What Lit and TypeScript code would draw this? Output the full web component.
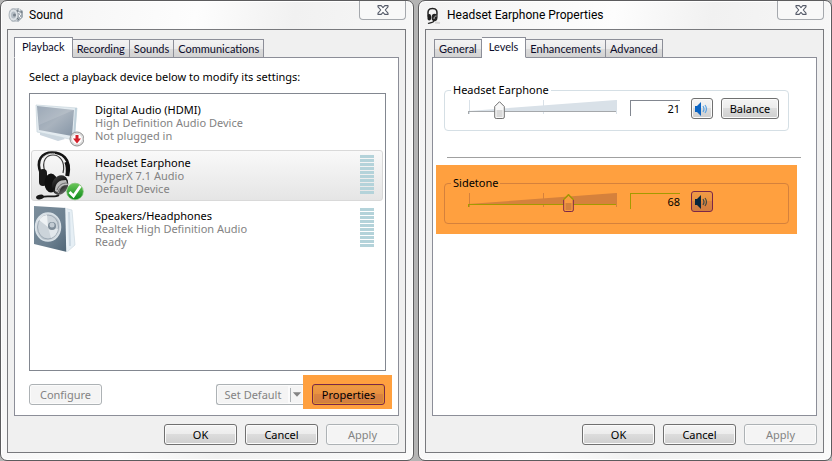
import { LitElement, html, svg, css } from "lit";
import { customElement, property } from "lit/decorators.js";
import { classMap } from "lit/directives/class-map.js";

const shared = css`
  * { box-sizing: border-box; }
  button, input {
    font: inherit;
    color: inherit;
    margin: 0;
  }
  svg { display: block; }
  .btn {
    width: 73px;
    height: 21px;
    padding: 0;
    border: 1px solid #707070;
    border-radius: 3px;
    background: linear-gradient(#f4f4f4 0%, #ececec 48%, #dcdcdc 50%, #cfcfcf 100%);
    box-shadow: inset 0 0 0 1px #fbfbfb;
    color: #000;
    text-align: center;
    line-height: 19px;
  }
  .btn:disabled {
    border-color: #adb2b5;
    background: #f4f4f4;
    color: #838383;
  }
`;

const closeIcon = svg`
  <svg width="12" height="10" viewBox="0 0 12 10" aria-hidden="true">
    <path d="M1 .6h3.200L6 2.600 7.800.6H11v1.200L8.200 5 11 8.200v1.200H7.800L6 7.400 4.200 9.400H1V8.200L3.800 5 1 1.800z"
      fill="#fff" stroke="#565b69" stroke-width="1.100" stroke-linejoin="round"/>
  </svg>`;

const soundIcon = svg`
  <svg width="16" height="16" viewBox="0 0 16 16" aria-hidden="true">
    <path d="M4 1h6l5 3v6l-5 5H4L1 11V4z" fill="#c9ced3"/>
    <path d="M10 1l5 3v6l-5 5-2-3 3-4-3-4z" fill="#a2abb3"/>
    <ellipse cx="5.500" cy="8" rx="4.500" ry="6" fill="#dde2e6" stroke="#a1a9b0" stroke-width=".8"/>
    <ellipse cx="5.500" cy="8" rx="2.500" ry="3.500" fill="#b3bcc4"/>
    <circle cx="6.500" cy="8" r="1.500" fill="#77818b"/>
    <path d="M10 5l3 2-2 2 2 2M11 2l1 2" stroke="#f3f5f6" fill="none"/>
    <path d="M9 3l1 2M13 4l1 2M9 11l2 2" stroke="#6f7982" fill="none"/>
  </svg>`;

const headsetSmall = svg`
  <svg width="16" height="18" viewBox="0 0 16 18" aria-hidden="true">
    <path d="M2.500 10C1 3 3 1.500 6.500 1.500S12 3 10.500 10" fill="none" stroke="#222" stroke-width="1.500"/>
    <rect x="1.500" y="7" width="3.500" height="6.500" rx="1.700" fill="#1c1c1c"/>
    <ellipse cx="8.500" cy="10.500" rx="3" ry="3.800" fill="#262626"/>
    <path d="M8 12c0-2 1-3 2.500-3" stroke="#bdbdbd" fill="none"/>
    <path d="M8 14c-1 2-3 1-6 2.500" stroke="#222" fill="none" stroke-width="1.300"/>
    <path d="M9 15.500l5 .5" stroke="#d5d5d5" stroke-width="2"/>
  </svg>`;

const monitorIcon = svg`
  <svg width="50" height="50" viewBox="0 0 50 50" aria-hidden="true">
    <defs>
      <linearGradient id="scr" x1="0" y1="0" x2="1" y2="1">
        <stop offset="0" stop-color="#8e9dad"/><stop offset=".5" stop-color="#a9b3be"/><stop offset="1" stop-color="#8595a6"/>
      </linearGradient>
    </defs>
    <path d="M6 33l21 5 4 3-7 2-18-6z" fill="#cbd6df"/>
    <path d="M2 7 43 10 40 42 3 34z" fill="#e3ebf0" stroke="#c9d5dd" stroke-width=".7"/>
    <path d="M41 10h2l-2 31-2 1z" fill="#bfd0da"/>
    <path d="M3 8 40 12 38 38 5 32z" fill="url(#scr)"/>
    <path d="M3 8 40 12 5 27z" fill="#fff" opacity=".13"/>
    <circle cx="43" cy="41" r="7" fill="#e8e8e8" stroke="#8e8e8e"/>
    <circle cx="43" cy="41" r="5.500" fill="#fff" stroke="#d2d2d2"/>
    <path d="M41.500 37h3v3.500h2.500L43 45.500 39 40.500h2.500z" fill="#d3202a"/>
  </svg>`;

const headsetIcon = svg`
  <svg width="50" height="50" viewBox="0 0 50 50" aria-hidden="true">
    <defs>
      <linearGradient id="cup" x1="0" y1="0" x2="1" y2="1">
        <stop offset="0" stop-color="#4a4a4a"/><stop offset=".5" stop-color="#111"/><stop offset="1" stop-color="#888"/>
      </linearGradient>
      <linearGradient id="ok" x1="0" y1="0" x2="0" y2="1">
        <stop offset="0" stop-color="#6cc75a"/><stop offset="1" stop-color="#0c8a1a"/>
      </linearGradient>
    </defs>
    <path d="M7 23C1 8 9 1.500 18 1.500S38 7 34 25" fill="none" stroke="#151515" stroke-width="2.600"/>
    <path d="M11 21C7 9 13 4 19 4s13 6 10 18" fill="none" stroke="#3a3a3a" stroke-width="1.200"/>
    <path d="M32 11c2 4 2 8 1 14" fill="none" stroke="#111" stroke-width="3.500"/>
    <path d="M9 7C12 3 16 2 21 2.500" fill="none" stroke="#b5b5b5" stroke-width=".8"/>
    <rect x="5" y="18" width="8" height="17" rx="4" fill="#1a1a1a"/>
    <ellipse cx="17" cy="32" rx="6.500" ry="9.500" fill="#111"/>
    <ellipse cx="26" cy="34" rx="8" ry="10" fill="url(#cup)" transform="rotate(20 26 34)"/>
    <path d="M21 40c0-8 4-11 11-11l2 5c-6 0-8 3-9 8z" fill="#bcbcbc"/>
    <path d="M23 39c2-5 5-7 10-7M24 41c2-5 5-7 10-6" stroke="#555" stroke-width=".8" fill="none"/>
    <path d="M25 44c-4 3-12 0-17 2" fill="none" stroke="#1a1a1a" stroke-width="1.800"/>
    <ellipse cx="6" cy="46" rx="4" ry="2.200" fill="#161616" transform="rotate(-12 6 46)"/>
    <circle cx="41" cy="40.500" r="8.300" fill="url(#ok)" stroke="#7fc274" stroke-width=".7"/>
    <path d="M35.500 41l4 4 7-10" fill="none" stroke="#fff" stroke-width="2.800"/>
  </svg>`;

const speakerIcon = svg`
  <svg width="50" height="50" viewBox="0 0 50 50" aria-hidden="true">
    <defs>
      <linearGradient id="box" x1="0" y1="0" x2="1" y2="1">
        <stop offset="0" stop-color="#7b8d9b"/><stop offset=".6" stop-color="#6d8191"/><stop offset="1" stop-color="#4f6576"/>
      </linearGradient>
      <linearGradient id="cone" x1="0" y1="0" x2="1" y2="1">
        <stop offset="0" stop-color="#f3f6f8"/><stop offset=".6" stop-color="#b6c0c8"/><stop offset="1" stop-color="#e5eaed"/>
      </linearGradient>
    </defs>
    <path d="M30 4 38 6 41 41 33 48z" fill="#e6eff5" stroke="#c6d3dc" stroke-width=".6"/>
    <path d="M35 8l1 34" stroke="#cddae4" stroke-width="2"/>
    <path d="M0 2 32 4 33 48 0 40z" fill="url(#box)"/>
    <path d="M32 4 33 48" stroke="#edf4f8" stroke-width="1.500"/>
    <ellipse cx="14" cy="23" rx="12.500" ry="14" fill="url(#cone)" stroke="#d8e1e7" stroke-width="1.500"/>
    <ellipse cx="14" cy="23" rx="10.500" ry="12" fill="#ccd4da" stroke="#8f9daa" stroke-width=".8"/>
    <path d="M14 23 5 16a11 12 0 0 1 8-5z" fill="#eef2f4"/>
    <path d="M14 23l10 2a11 12 0 0 1-7 9z" fill="#e2e8ec"/>
    <circle cx="18" cy="22" r="4" fill="#7e8c98"/>
    <circle cx="18" cy="21" r="2.500" fill="#c3ccd3"/>
  </svg>`;

@customElement("dialog-window")
export class DialogWindow extends LitElement {
  @property() heading = "";
  @property() icon = "";
  @property({ attribute: false }) tabs: string[] = [];
  @property({ type: Number }) active = 0;

  static styles = [shared, css`
    :host {
      box-sizing: border-box;
      display: flex;
      flex-direction: column;
      min-width: 0;
      padding: 0 7px 7px 6px;
      border: 1px solid #5c5c5e;
      border-radius: 7px;
      background: linear-gradient(100deg, #f3f3f3 0%, #fdfdfd 40%, #f1f1f1 60%, #fafafa 100%);
      box-shadow: inset 0 0 0 1px #fff;
    }
    .bar {
      display: flex;
      align-items: flex-start;
      height: 28px;
    }
    .icon { width: 22px; padding: 6px 0 0 1px; }
    h1 {
      flex: 1;
      margin: 0;
      font-family: Roboto, "Open Sans", sans-serif;
      font-size: 12px;
      font-weight: 400;
      line-height: 28px;
    }
    .close {
      display: grid;
      place-items: center;
      width: 47px;
      height: 19px;
      padding: 0;
      border: 1px solid #a5a8ad;
      border-top: 0;
      border-radius: 0 0 4px 4px;
      background: #f8f8f8;
    }
    .client {
      flex: 1;
      display: flex;
      flex-direction: column;
      padding: 7px 6px 7px;
      border: 1px solid #78797d;
      background: #f0f0f0;
    }
    .tabs {
      display: flex;
      align-items: flex-end;
      height: 21px;
      margin-bottom: -1px;
      z-index: 1;
    }
    .tab {
      height: 19px;
      padding: 0 4px;
      border: 1px solid #8c8e98;
      border-left-width: 0;
      background: linear-gradient(#f3f3f3, #ebebeb 50%, #dcdcdc 52%, #d2d2d2);
      color: #0b0b2a;
      font-family: Lato, "Open Sans", sans-serif;
      line-height: 17px;
      white-space: nowrap;
    }
    .tab:first-child:not(.on) { margin-left: 2px; border-left-width: 1px; }
    .tab.on {
      height: 21px;
      padding: 0 7px 2px;
      border-left-width: 1px;
      border-bottom-color: #fff;
      background: #fff;
    }
    .tab:not(.on) + .tab.on { border-left-width: 0; }
    .panel {
      flex: 1;
      display: flex;
      flex-direction: column;
      border: 1px solid #8c8e98;
      background: #fff;
    }
    ::slotted(*) { flex: 1; }
    .actions {
      display: flex;
      justify-content: flex-end;
      gap: 8px;
      padding-top: 8px;
    }
  `];

  render() {
    return html`
      <header class="bar">
        <span class="icon">${this.icon === "headset" ? headsetSmall : soundIcon}</span>
        <h1>${this.heading}</h1>
        <button class="close" aria-label="Close">${closeIcon}</button>
      </header>
      <div class="client">
        <div class="tabs" role="tablist">
          ${this.tabs.map((t, i) => html`
            <button role="tab" aria-selected=${i === this.active}
              class=${classMap({ tab: true, on: i === this.active })}>${t}</button>`)}
        </div>
        <section class="panel" role="tabpanel"><slot></slot></section>
        <footer class="actions">
          <button class="btn">OK</button>
          <button class="btn">Cancel</button>
          <button class="btn" disabled>Apply</button>
        </footer>
      </div>`;
  }
}

const devices = [
  { name: "Digital Audio (HDMI)", driver: "High Definition Audio Device", status: "Not plugged in", icon: monitorIcon, meter: false, selected: false },
  { name: "Headset Earphone", driver: "HyperX 7.1 Audio", status: "Default Device", icon: headsetIcon, meter: true, selected: true },
  { name: "Speakers/Headphones", driver: "Realtek High Definition Audio", status: "Ready", icon: speakerIcon, meter: true, selected: false },
];

@customElement("playback-page")
export class PlaybackPage extends LitElement {
  static styles = [shared, css`
    :host {
      display: flex;
      flex-direction: column;
      padding: 11px 6px 6px 14px;
    }
    p { margin: 0; line-height: 16px; }
    .list {
      flex: 1;
      margin: 8px 6px 4px 0;
      padding: 3px 2px 3px 1px;
      border: 1px solid #828790;
      list-style: none;
    }
    .device {
      display: grid;
      grid-template-columns: 50px 1fr 14px;
      column-gap: 11px;
      height: 51px;
      margin-bottom: 2px;
      padding: 0 8px 0 2px;
      border: 1px solid transparent;
      border-radius: 3px;
    }
    .device.on {
      border-color: #d9d9d9;
      background: linear-gradient(#f9f9f9, #e5e5e5);
    }
    .info { padding-top: 5px; line-height: 13px; color: #838383; }
    .name { color: #000; }
    .meter {
      height: 39px;
      margin-top: 4px;
      background: repeating-linear-gradient(#b4d3da 0 3px, transparent 3px 4px);
    }
    .row { display: flex; }
    .spacer { flex: 1; }
    .split { display: flex; }
    .split .main { border-right: 0; border-radius: 3px 0 0 3px; }
    .split .drop {
      display: grid;
      place-items: center;
      width: 14px;
      border-left: 0;
      border-right: 0;
      border-radius: 0;
    }
    .drop svg { border-left: 1px solid #adb2b5; }
    .mark {
      height: 34px;
      padding: 9px 7px 4px 9px;
      background: #ffa03f;
    }
    .mark .btn {
      border-color: #7b2748;
      background: linear-gradient(#f09a46 0%, #e8913f 48%, #db8340 50%, #d17d40 100%);
      box-shadow: inset 0 0 0 1px #e79a2c;
    }
    .row > .btn, .split { margin-top: 9px; }
  `];

  render() {
    return html`
      <p>Select a playback device below to modify its settings:</p>
      <ul class="list">
        ${devices.map((d) => html`
          <li class=${classMap({ device: true, on: d.selected })}>
            ${d.icon}
            <div class="info">
              <div class="name">${d.name}</div>
              <div>${d.driver}</div>
              <div>${d.status}</div>
            </div>
            ${d.meter ? html`<div class="meter"></div>` : ""}
          </li>`)}
      </ul>
      <div class="row">
        <button class="btn" disabled>Configure</button>
        <span class="spacer"></span>
        <div class="split">
          <button class="btn main" disabled>Set Default</button>
          <button class="btn drop" disabled aria-label="More default options">
            <svg width="13" height="14" viewBox="0 0 13 14"><path d="M2 4h9L6.500 9z" fill="#838383"/></svg>
          </button>
        </div>
        <div class="mark"><button class="btn">Properties</button></div>
      </div>`;
  }
}

@customElement("level-group")
export class LevelGroup extends LitElement {
  @property() label = "";
  @property({ type: Number }) level = 0;
  @property({ type: Boolean }) balance = false;
  @property({ type: Boolean, reflect: true }) marked = false;

  static styles = [shared, css`
    :host {
      --line: #d5dfe5;
      --wedge: #d9e1e8;
      --track: #a5a8ab;
      --edge: #707070;
      --glyph: #0a63c2;
      --wave: #5da4e4;
      --field: #828790;
      --thumb: url("data:image/svg+xml,%3Csvg xmlns='http://www.w3.org/2000/svg' width='11' height='18'%3E%3Cpath d='M5.500 .7 10.300 5.500V16q0 1.500-1.500 1.500H2.200Q.7 17.500 .7 16V5.500z' fill='%23f8f8f8' stroke='%23707070'/%3E%3Cpath d='M2.500 9h6v7h-6z' fill='%23d9d9d9'/%3E%3C/svg%3E");
      display: block;
    }
    :host([marked]) {
      --line: #d5813c;
      --wedge: #d5813c;
      --track: #a39a00;
      --edge: #7b2748;
      --glyph: #08263c;
      --wave: #434a42;
      --field: #a39a00;
      --thumb: url("data:image/svg+xml,%3Csvg xmlns='http://www.w3.org/2000/svg' width='11' height='18'%3E%3Cpath d='M5.500 .7 10.300 5.500V16q0 1.500-1.500 1.500H2.200Q.7 17.500 .7 16V5.500z' fill='%23fa9c40' stroke='%237b2748'/%3E%3Cpath d='M.7 6V5.500L5.500 .7 10.300 5.500V6' fill='none' stroke='%23a39a00' stroke-width='1.400'/%3E%3Cpath d='M2.500 9h6v7h-6z' fill='%23d5813c'/%3E%3C/svg%3E");
      background: #ffa03f;
    }
    fieldset {
      min-width: 0;
      height: 49px;
      margin: 0;
      padding: 0 9px 0 22px;
      border: 1px solid var(--line);
      border-radius: 4px;
    }
    legend {
      margin-left: -16px;
      padding: 0 2px;
      line-height: 16px;
    }
    .controls {
      display: flex;
      align-items: flex-start;
    }
    .slider { display: grid; width: 152px; margin-right: 11px; padding-top: 2px; }
    .slider > * { grid-area: 1 / 1; }
    .slider path { fill: var(--wedge); }
    .slider line { stroke: var(--wedge); }
    .slider .track { stroke: var(--track); }
    input[type="range"] {
      appearance: none;
      width: 158px;
      height: 20px;
      margin-left: -4px;
      background: none;
    }
    input[type="range"]::-webkit-slider-thumb {
      appearance: none;
      width: 11px;
      height: 18px;
      border: 0;
      border-radius: 0;
      background: var(--thumb) no-repeat;
    }
    .value {
      width: 50px;
      height: 16px;
      margin: 2px 11px 0 0;
      padding: 0;
      border: 0 solid var(--field);
      border-width: 1px 0 0 1px;
      border-radius: 0;
      background: none;
      text-align: right;
      outline: 0;
    }
    .mute {
      display: grid;
      place-items: center;
      width: 22px;
      margin-right: 8px;
    }
    .balance { width: 58px; }
    :host([marked]) .btn {
      border-color: var(--edge);
      background: linear-gradient(#f09a46 0%, #e8913f 48%, #db8340 50%, #d17d40 100%);
      box-shadow: none;
    }
    .mute path { fill: var(--glyph); }
    .mute .wave { fill: none; stroke: var(--wave); }
  `];

  render() {
    return html`
      <fieldset>
        <legend>${this.label}</legend>
        <div class="controls">
          <div class="slider">
            <svg width="152" height="20" viewBox="0 0 152 20" aria-hidden="true">
              <path d="M1 11 149 0V11H1z"/>
              <line x1="2.500" x2="2.500" y1="0" y2="14"/>
              <line x1="76.500" x2="76.500" y1="0" y2="14"/>
              <line x1="149.500" x2="149.500" y1="0" y2="14"/>
              <line class="track" x1="1" x2="149" y1="11.500" y2="11.500"/>
              <line class="track" x1="1.500" x2="1.500" y1="11" y2="14"/>
            </svg>
            <input type="range" min="0" max="100" .value=${String(this.level)} aria-label=${this.label + " level"}>
          </div>
          <input class="value" type="text" .value=${String(this.level)} aria-label=${this.label + " value"}>
          <button class="btn mute" aria-label="Mute">
            <svg width="16" height="14" viewBox="0 0 16 14">
              <path d="M1 4h2l4-4v14L3 10H1z"/>
              <path class="wave" d="M9 4q2 3 0 6M11 3q3 4 0 8" stroke-width="1.200"/>
            </svg>
          </button>
          ${this.balance ? html`<button class="btn balance">Balance</button>` : ""}
        </div>
      </fieldset>`;
  }
}

@customElement("app-root")
export class AppRoot extends LitElement {
  static styles = css`
    :host {
      display: grid;
      grid-template-columns: 1fr 1fr;
      gap: 4px;
      min-height: 100vh;
      background: #b4b4b4;
      font: 11px/16px "Noto Sans", "Open Sans", sans-serif;
      color: #000;
    }
    .levels { padding: 24px 15px 0 11px; }
    .sep {
      height: 1px;
      margin: 26px 0 7px 3px;
      border: 0;
      background: #a0a0a0;
    }
    .first { margin-right: 12px; }
    .second { margin: 0 4px 0 -8px; padding: 10px 8px 10px 8px; }
  `;

  render() {
    return html`
      <dialog-window heading="Sound" icon="sound" .tabs=${["Playback", "Recording", "Sounds", "Communications"]}>
        <playback-page></playback-page>
      </dialog-window>
      <dialog-window heading="Headset Earphone Properties" icon="headset" active="1"
        .tabs=${["General", "Levels", "Enhancements", "Advanced"]}>
        <div class="levels">
          <level-group class="first" label="Headset Earphone" level="21" balance></level-group>
          <hr class="sep">
          <level-group class="second" label="Sidetone" level="68" marked></level-group>
        </div>
      </dialog-window>`;
  }
}
